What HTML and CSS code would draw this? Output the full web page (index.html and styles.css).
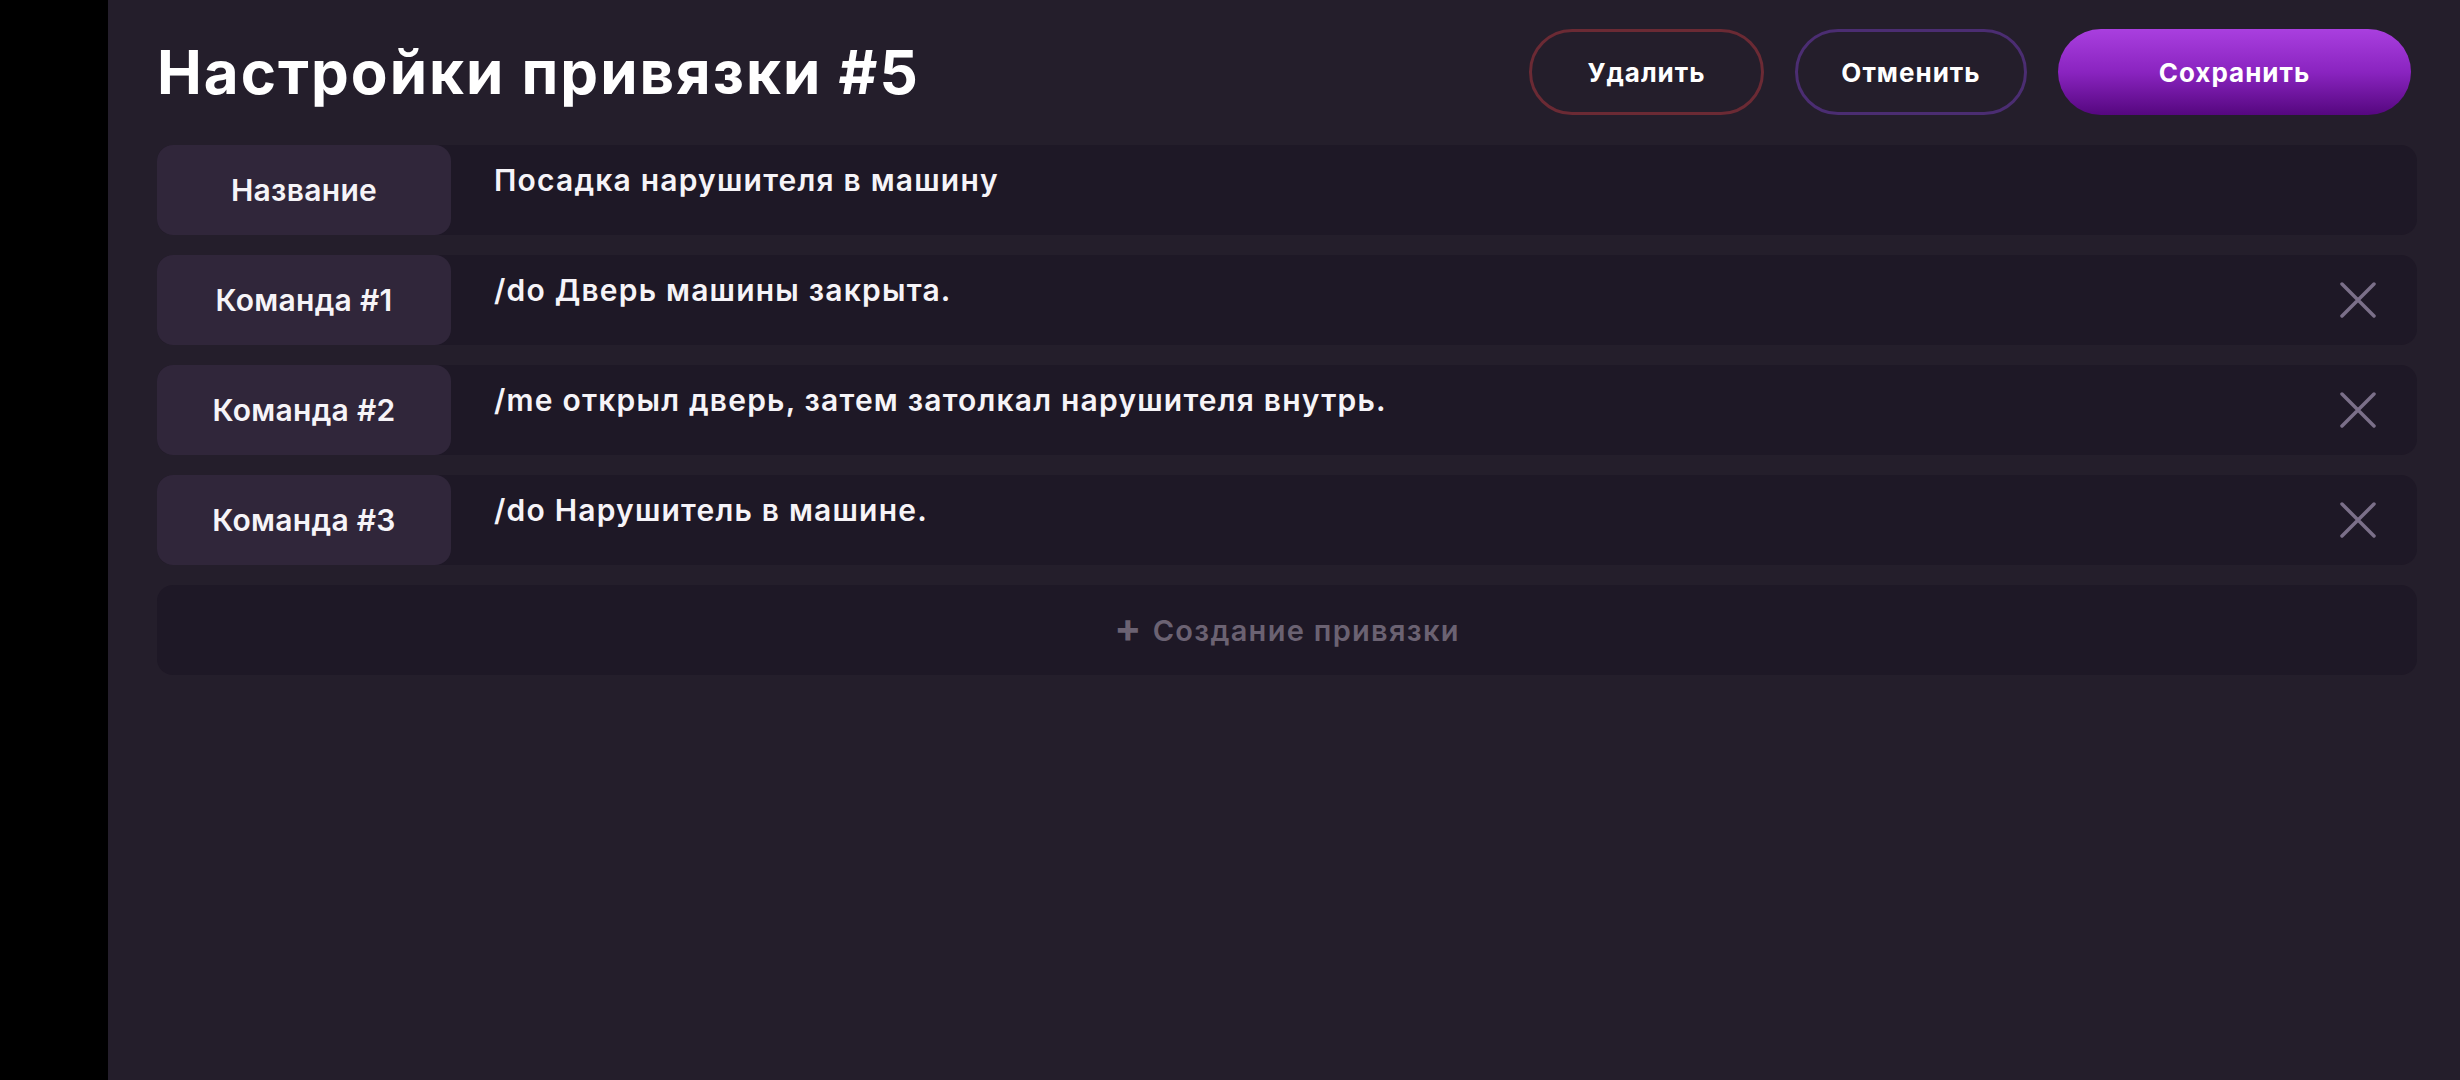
FILE: index.html
```html
<!DOCTYPE html>
<html lang="ru">
<head>
<meta charset="utf-8">
<title>Настройки привязки #5</title>
<link rel="stylesheet" href="styles.css">
</head>
<body>
<div class="app">
  <aside class="sidebar"></aside>
  <main class="main">
    <header class="header">
      <h1 class="title">Настройки привязки #5</h1>
      <div class="actions">
        <button class="btn btn-delete">Удалить</button>
        <button class="btn btn-cancel">Отменить</button>
        <button class="btn btn-save">Сохранить</button>
      </div>
    </header>
    <section class="list">
      <div class="row">
        <div class="label">Название</div>
        <div class="value">Посадка нарушителя в машину</div>
      </div>
      <div class="row">
        <div class="label">Команда #1</div>
        <div class="value">/do Дверь машины закрыта.</div>
        <span class="remove"><svg viewBox="0 0 36 36" width="36" height="36"><path d="M2 2 L34 34 M34 2 L2 34" stroke="#7b6f89" stroke-width="3.5" stroke-linecap="round" fill="none"/></svg></span>
      </div>
      <div class="row">
        <div class="label">Команда #2</div>
        <div class="value">/me открыл дверь, затем затолкал нарушителя внутрь.</div>
        <span class="remove"><svg viewBox="0 0 36 36" width="36" height="36"><path d="M2 2 L34 34 M34 2 L2 34" stroke="#7b6f89" stroke-width="3.5" stroke-linecap="round" fill="none"/></svg></span>
      </div>
      <div class="row">
        <div class="label">Команда #3</div>
        <div class="value">/do Нарушитель в машине.</div>
        <span class="remove"><svg viewBox="0 0 36 36" width="36" height="36"><path d="M2 2 L34 34 M34 2 L2 34" stroke="#7b6f89" stroke-width="3.5" stroke-linecap="round" fill="none"/></svg></span>
      </div>
      <div class="add-row"><span class="plus">+</span><span>Создание привязки</span></div>
    </section>
  </main>
</div>
</body>
</html>
```
FILE: styles.css
```css
* { box-sizing: border-box; }
html, body { margin: 0; padding: 0; height: 100%; }
body {
  background: #000;
  font-family: Inter, "Noto Sans", sans-serif;
  color: #f6f4f8;
}
.app { display: flex; height: 1080px; }
.sidebar { width: 108px; flex: none; background: #000; }
.main {
  flex: 1;
  background: #241e2b;
  padding: 29px 43px 0 49px;
}
.header {
  display: flex;
  align-items: center;
  justify-content: space-between;
  height: 86px;
  padding-right: 6px;
}
.title {
  margin: 0;
  font-size: 60px;
  font-weight: 700;
  letter-spacing: 2px;
  line-height: 1;
  color: #fff;
}
.actions { display: flex; gap: 31px; height: 86px; }
.btn {
  height: 86px;
  border-radius: 43px;
  font-family: inherit;
  font-size: 26px;
  font-weight: 700;
  letter-spacing: 1px;
  color: #fff;
  background: transparent;
  padding: 0;
  cursor: pointer;
}
.btn-delete { width: 235px; border: 3px solid #6b2a34; }
.btn-cancel { width: 232px; border: 3px solid #4b2d72; }
.btn-save {
  width: 353px;
  border: none;
  background: linear-gradient(180deg, #a93fdf 0%, #8a24c0 50%, #55077f 100%);
}
.list {
  margin-top: 30px;
  display: flex;
  flex-direction: column;
  gap: 20px;
}
.row {
  display: flex;
  align-items: stretch;
  height: 90px;
  background: #1e1826;
  border-radius: 16px;
}
.label {
  width: 294px;
  flex: none;
  background: #30263a;
  border-radius: 16px;
  display: flex;
  align-items: center;
  justify-content: center;
  font-size: 30px;
  font-weight: 600;
  letter-spacing: 0.3px;
}
.value {
  flex: 1;
  padding: 15px 0 0 43px;
  font-size: 30px;
  font-weight: 600;
  line-height: 40px;
  letter-spacing: 1.2px;
}
.remove {
  flex: none;
  display: flex;
  align-items: center;
  margin-right: 41px;
}
.add-row {
  height: 90px;
  background: #1e1826;
  border-radius: 16px;
  display: flex;
  align-items: center;
  justify-content: center;
  font-size: 29px;
  font-weight: 600;
  letter-spacing: 1.3px;
  color: #6b6272;
  gap: 10px;
}
.plus { font-size: 40px; font-weight: 700; line-height: 1; margin-top: -4px; }
```
